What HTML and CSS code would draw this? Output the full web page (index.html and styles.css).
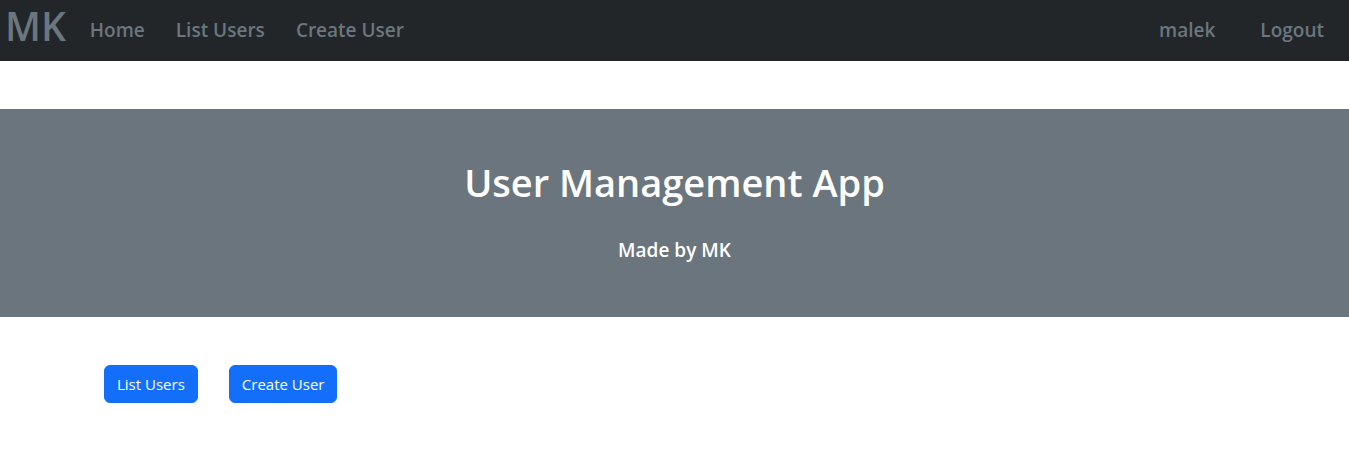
FILE: index.html
```
<!DOCTYPE html>
<html lang="en">
<head>
<meta charset="utf-8">
<title>User Management App</title>
<link rel="stylesheet" href="styles.css">
</head>
<body>
<nav class="navbar">
  <a class="brand" href="#">MK</a>
  <div class="nav-links">
    <a class="nav-link" href="#">Home</a>
    <a class="nav-link" href="#">List Users</a>
    <a class="nav-link" href="#">Create User</a>
  </div>
  <div class="nav-account">
    <a class="nav-link" href="#">malek</a>
    <a class="nav-link" href="#">Logout</a>
  </div>
</nav>
<header class="hero">
  <h1 class="hero-title">User Management App</h1>
  <p class="hero-subtitle">Made by MK</p>
</header>
<main class="actions">
  <button class="btn" type="button">List Users</button>
  <button class="btn" type="button">Create User</button>
</main>
</body>
</html>
```

FILE: styles.css
```
* { box-sizing: border-box; }
body {
  margin: 0;
  background: #fff;
  font-family: "Open Sans", "Noto Sans", sans-serif;
  font-size: 15px;
  line-height: 24px;
}
.navbar {
  display: flex;
  align-items: center;
  padding: 0 25px 2px 5px;
  min-height: 61px;
  background: #222629;
}
.navbar a { color: #6b767e; text-decoration: none; }
.brand {
  margin-right: 24px;
  padding-bottom: 8px;
  font-size: 39px;
  line-height: 48px;
  font-weight: 600;
}
.nav-links { display: flex; gap: 31px; }
.nav-account { display: flex; gap: 45px; margin-left: auto; }
.nav-link { font-size: 19px; font-weight: 600; }
.hero {
  margin-top: 48px;
  padding: 49px 24px 55px;
  background: #6b757d;
  color: #fff;
  text-align: center;
}
.hero-title {
  margin: 0 0 32px;
  font-size: 38px;
  line-height: 48px;
  font-weight: 600;
}
.hero-subtitle {
  margin: 0;
  font-size: 19px;
  line-height: 24px;
  font-weight: 600;
}
.actions { display: flex; gap: 31px; padding: 48px 104px; }
.btn {
  padding: 6px 12px;
  border: 1px solid #136ffa;
  border-radius: 6px;
  background: #136ffa;
  color: #fff;
  font: inherit;
}
```
